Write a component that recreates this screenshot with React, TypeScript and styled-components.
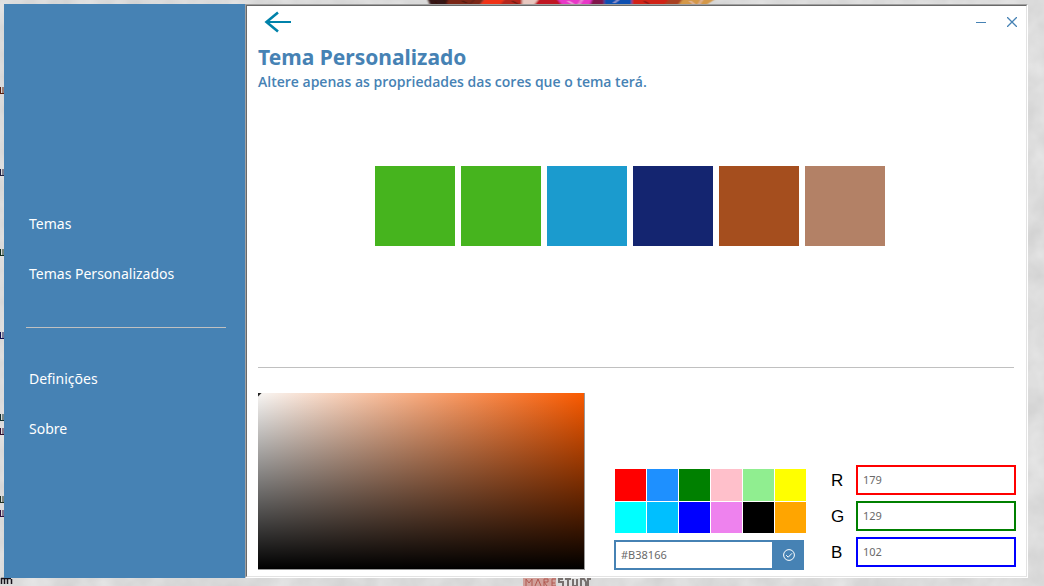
import React from "react";
import styled, { createGlobalStyle } from "styled-components";

const Global = createGlobalStyle`
  * { box-sizing: border-box; }
  html, body { margin: 0; }
  body { font-family: "Noto Sans", "Open Sans", sans-serif; background: #dcdcdc; }
`;

const Desktop = styled.div`
  position: relative;
  display: flex;
  min-height: 100vh;
  padding: 4px 16px 8px 4px;
  overflow: hidden;
  background: #dcdcdc;
`;

const Wallpaper = styled.svg`
  position: absolute;
  inset: 0;
  width: 100%;
  height: 100%;
`;

const Window = styled.div`
  position: relative;
  display: flex;
  flex: 1;
`;

const Sidebar = styled.nav`
  flex: 0 0 241px;
  padding: 194px 19px 20px 22px;
  background: #4682b4;
`;

const NavLink = styled.a`
  display: flex;
  align-items: center;
  height: 50px;
  padding-left: 3px;
  color: #fff;
  font-size: 14px;
  text-decoration: none;
`;

const NavRule = styled.hr`
  height: 1px;
  margin: 29px 0 25px;
  border: 0;
  background: #c0c0c0;
`;

const Content = styled.main`
  display: flex;
  flex: 1;
  flex-direction: column;
  min-width: 0;
  border: 1px solid;
  border-color: #a0a0a0 #fff #fff #a0a0a0;
  background: #fff;
`;

const Frame = styled.div`
  display: flex;
  flex: 1;
  flex-direction: column;
  padding: 0 12px 6px 11px;
  border: 1px solid;
  border-color: #696969 #e3e3e3 #e3e3e3 #696969;
`;

const TitleBar = styled.header`
  display: flex;
  align-items: center;
  justify-content: space-between;
  height: 32px;
`;

const IconButton = styled.button`
  display: flex;
  align-items: center;
  justify-content: center;
  width: 31px;
  height: 28px;
  padding: 0;
  border: 0;
  background: transparent;
`;

const BackButton = styled(IconButton)`
  width: 40px;
`;

const WindowControls = styled.div`
  display: flex;
  margin-right: -13px;
`;

const Heading = styled.h1`
  margin: 3px 0 0;
  color: #4682b4;
  font-size: 21px;
  line-height: 32px;
`;

const Subtitle = styled.p`
  margin: 0;
  color: #4682b4;
  font-family: "Open Sans", sans-serif;
  font-size: 14px;
  font-weight: 600;
  line-height: 17px;
`;

const ThemeColors = styled.section`
  display: flex;
  flex: 1;
  align-items: flex-start;
  justify-content: center;
  gap: 6px;
  padding: 76px 12px 0 0;
`;

const ThemeColor = styled.button<{ $color: string }>`
  width: 80px;
  height: 80px;
  padding: 0;
  border: 0;
  background: ${(p) => p.$color};
`;

const Divider = styled.hr`
  width: 100%;
  height: 1px;
  margin: 0 0 25px;
  border: 0;
  background: #c0c0c0;
`;

const Editor = styled.section`
  display: flex;
  align-items: flex-end;
`;

const Spectrum = styled.div`
  flex: 1 1 327px;
  height: 177px;
  margin-right: 29px;
  border: solid #999;
  border-width: 0 1px 1px 0;
  background:
    linear-gradient(135deg, #222 2px, transparent 3px),
    linear-gradient(to bottom, transparent, #000),
    linear-gradient(to right, #f8f6f4, #fa5a00);
`;

const Palette = styled.div`
  flex: 0 0 192px;
`;

const Presets = styled.div`
  display: grid;
  grid-template-columns: repeat(6, 31px);
  grid-template-rows: 32px 31px;
  gap: 1px;
  padding: 0 0 7px 1px;
`;

const Preset = styled.button<{ $color: string }>`
  padding: 0;
  border: 0;
  background: ${(p) => p.$color};
`;

const HexField = styled.div`
  display: flex;
  width: 190px;
  height: 30px;
  border: 2px solid #4682b4;
`;

const HexInput = styled.input`
  flex: 1;
  min-width: 0;
  padding: 0 5px 2px;
  border: 0;
  background: #fff;
  color: #696969;
  font: 11px "Noto Sans", sans-serif;
`;

const ApplyButton = styled(IconButton)`
  width: 30px;
  height: 26px;
  padding-left: 4px;
  background: #4682b4;
`;

const Channels = styled.div`
  display: grid;
  gap: 6px;
  margin: 0 -2px 3px 25px;
`;

const Channel = styled.label`
  display: flex;
  align-items: center;
  color: #000;
  font: 17px "Liberation Sans", sans-serif;
`;

const ChannelName = styled.span`
  width: 25px;
  padding-top: 2px;
`;

const ChannelInput = styled.input<{ $color: string }>`
  width: 160px;
  height: 30px;
  padding: 0 5px 2px;
  border: 2px solid ${(p) => p.$color};
  background: #fff;
  color: #696969;
  font: 11px "Noto Sans", sans-serif;
`;

const themeColors = ["#46b41e", "#46b41e", "#1b9bce", "#142570", "#a54e1e", "#b38166"];

const presets = [
  "#ff0000", "#1e90ff", "#008000", "#ffc0cb", "#90ee90", "#ffff00",
  "#00ffff", "#00bfff", "#0000ff", "#ee82ee", "#000000", "#ffa500",
];

const channels = [
  { name: "R", value: "179", color: "#ff0000" },
  { name: "G", value: "129", color: "#008000" },
  { name: "B", value: "102", color: "#0000ff" },
];

const labelEdges = [
  { y: 90, color: "#5a2010" },
  { y: 172, color: "#202040" },
  { y: 252, color: "#103020" },
  { y: 335, color: "#101050" },
  { y: 417, color: "#103030" },
  { y: 431, color: "#301030" },
  { y: 499, color: "#203020" },
  { y: 513, color: "#301040" },
];

const App: React.FC = () => (
  <>
    <Global />
    <Desktop>
      <Wallpaper aria-hidden="true">
        <filter id="plaster" x="0" y="0" width="100%" height="100%" colorInterpolationFilters="sRGB">
          <feTurbulence type="fractalNoise" baseFrequency="0.04" numOctaves="3" seed="4" />
          <feColorMatrix values="0.1 0 0 0 0.81  0.1 0 0 0 0.81  0.1 0 0 0 0.81  0 0 0 0 1" />
        </filter>
        <filter id="soft">
          <feGaussianBlur stdDeviation="1.2 0.4" />
        </filter>
        <rect width="100%" height="100%" filter="url(#plaster)" />
        <g filter="url(#soft)">
          <path d="M428 0h28l-8 5h-18z" fill="#351512" />
          <path d="M448 0h36l-4 5h-34z" fill="#7a2618" />
          <path d="M484 0h20l-2 5h-22z" fill="#f03018" />
          <path d="M504 0h22v5h-26z" fill="#b4281e" />
          <path d="M522 0h16l-2 5h-14z" fill="#e8c8c0" />
          <path d="M538 0h22l4 5h-30z" fill="#c01820" />
          <path d="M558 0h36l-4 5h-28z" fill="#e838c8" />
          <path d="M592 0h12l2 5h-16z" fill="#801848" />
          <path d="M604 0h28l4 5h-32z" fill="#1050b0" />
          <path d="M632 0h40l-4 5h-36z" fill="#d02018" />
          <path d="M668 0h16l-4 5h-16z" fill="#a84020" />
          <path d="M682 0h32l-8 5h-28z" fill="#d49848" />
          <path d="M434 1l4 3M444 0l3 4M462 1l5 2M474 0l-4 4M512 1l6 3M644 1l5 3" stroke="#3a100c" />
          <path d="M568 1l5 3M582 0l-3 4M614 3l4-3M690 1l4 3M702 0l-3 4" stroke="#f4d8e8" />
        </g>
        {labelEdges.map(({ y, color }) => (
          <path key={y} d={`M0.5 ${y - 3}v7M3 ${y - 3}v7M0 ${y + 3.5}h4`} stroke={color} />
        ))}
        <path d="M1.5 578v6M4.5 578v6M7.5 578v6M11.5 579v5M1 578.5h10" stroke="#16121a" strokeWidth="1.5" />
        <path d="M523 578h33v8h-33z" fill="#d0a09a" />
        <path d="M526 586v-7l3 4l3-4v7M535 586l3-7l3 7M544 586v-7h4v3h-4l3 4M556 579h-4v7h4M552 583h3" stroke="#b05850" fill="none" />
        <path d="M563 579h-4v3h4v4M565 579h6M568 579v7M573 579v7h4v-7M581 586v-7h3l2 3v4M591 579h-3v7" stroke="#77716f" strokeWidth="2" fill="none" />
      </Wallpaper>
      <Window>
        <Sidebar>
          <NavLink href="#temas">Temas</NavLink>
          <NavLink href="#personalizados">Temas Personalizados</NavLink>
          <NavRule />
          <NavLink href="#definicoes">Definições</NavLink>
          <NavLink href="#sobre">Sobre</NavLink>
        </Sidebar>
        <Content>
          <Frame>
            <TitleBar>
              <BackButton aria-label="Voltar">
                <svg width="28" height="22" viewBox="0 0 28 22" fill="none" stroke="#0082aa">
                  <path d="M27 11H3" strokeWidth="2" />
                  <path d="M14 1.5L2.5 11L14 20.5" strokeWidth="2.6" />
                </svg>
              </BackButton>
              <WindowControls>
                <IconButton aria-label="Minimizar">
                  <svg width="10" height="10" viewBox="0 0 10 10">
                    <path d="M0 5.5h10" stroke="#4682b4" />
                  </svg>
                </IconButton>
                <IconButton aria-label="Fechar">
                  <svg width="10" height="10" viewBox="0 0 10 10">
                    <path d="M0 0l10 10M10 0L0 10" stroke="#4682b4" strokeWidth="1.3" />
                  </svg>
                </IconButton>
              </WindowControls>
            </TitleBar>
            <Heading>Tema Personalizado</Heading>
            <Subtitle>Altere apenas as propriedades das cores que o tema terá.</Subtitle>
            <ThemeColors>
              {themeColors.map((color, i) => (
                <ThemeColor key={i} $color={color} aria-label={`Cor ${i + 1}`} />
              ))}
            </ThemeColors>
            <Divider />
            <Editor>
              <Spectrum />
              <Palette>
                <Presets>
                  {presets.map((color) => (
                    <Preset key={color} $color={color} aria-label={color} />
                  ))}
                </Presets>
                <HexField>
                  <HexInput aria-label="Cor hexadecimal" defaultValue="#B38166" />
                  <ApplyButton aria-label="Aplicar">
                    <svg width="12" height="12" viewBox="0 0 12 12" fill="none" stroke="#fff">
                      <circle cx="6" cy="6" r="5.4" />
                      <path d="M3.2 6.2l2 2L9 4.3" />
                    </svg>
                  </ApplyButton>
                </HexField>
              </Palette>
              <Channels>
                {channels.map(({ name, value, color }) => (
                  <Channel key={name}>
                    <ChannelName>{name}</ChannelName>
                    <ChannelInput $color={color} defaultValue={value} />
                  </Channel>
                ))}
              </Channels>
            </Editor>
          </Frame>
        </Content>
      </Window>
    </Desktop>
  </>
);

export default App;
